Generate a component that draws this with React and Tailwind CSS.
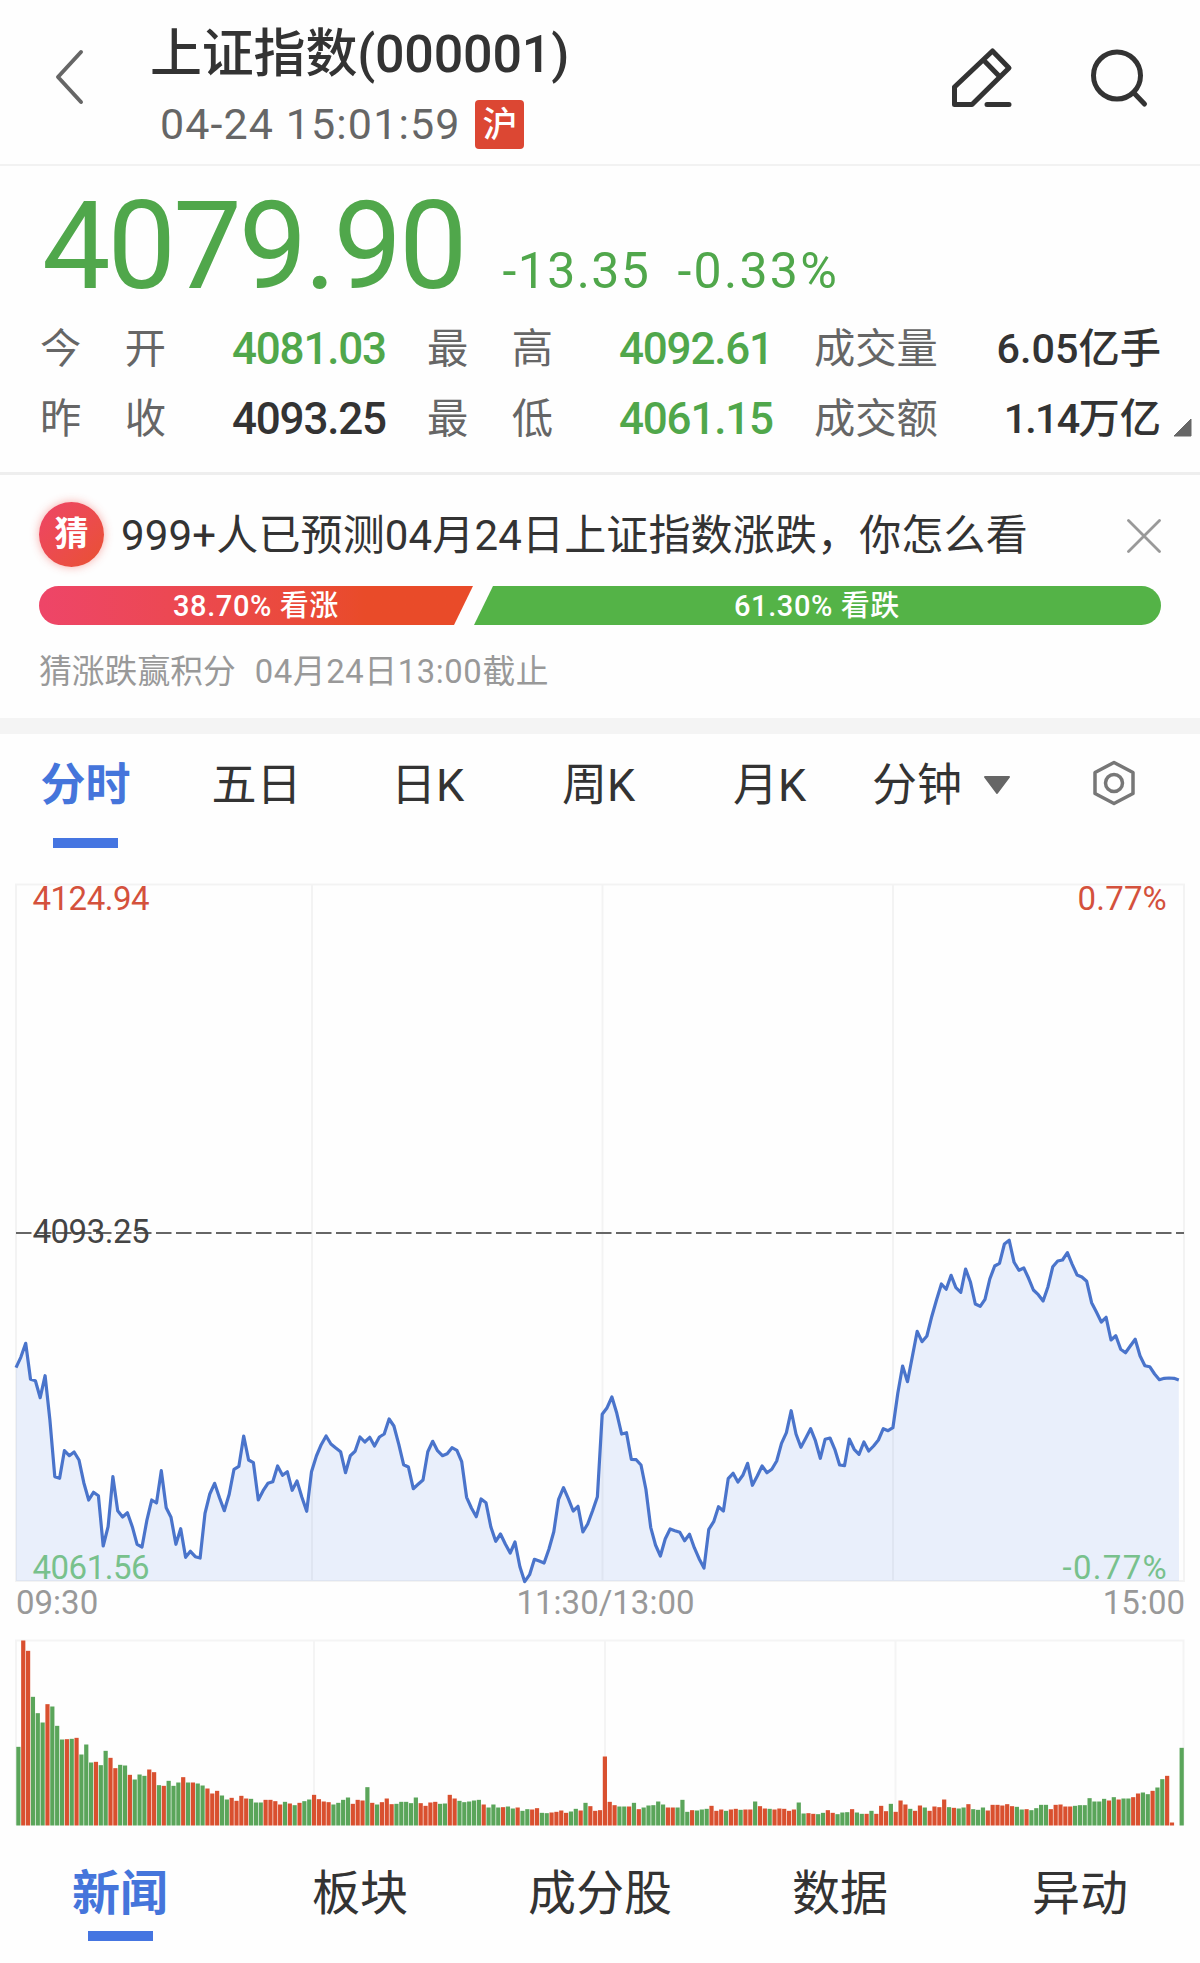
import clsx from "clsx";

const PERIOD_TABS = ["分时", "五日", "日K", "周K", "月K"];
const BOTTOM_TABS = ["新闻", "板块", "成分股", "数据", "异动"];

// one entry per minute, 09:30 - 15:00, in thirds of a pixel above/below the plot origin
const PRICES = [
  203, 172, 130, 238, 242, 293, 227, 360, 530, 535, 452, 467, 456, 480, 548,
  600, 577, 587, 738, 680, 530, 632, 651, 638, 680, 733, 741, 662, 600, 609,
  512, 623, 652, 733, 686, 772, 754, 770, 774, 640, 582, 550, 593, 632, 583,
  508, 499, 408, 480, 488, 600, 572, 550, 545, 498, 526, 515, 571, 543, 592,
  634, 515, 468, 434, 408, 432, 444, 455, 518, 467, 454, 411, 426, 412, 438,
  411, 402, 357, 378, 433, 494, 501, 566, 553, 540, 455, 424, 452, 467, 461,
  443, 451, 485, 592, 624, 650, 597, 608, 680, 724, 702, 732, 759, 726, 800,
  845, 824, 778, 783, 789, 748, 695, 598, 563, 596, 633, 619, 696, 672, 632,
  590, 343, 323, 291, 340, 402, 398, 478, 479, 495, 568, 682, 735, 768, 717,
  687, 692, 697, 722, 703, 743, 776, 804, 688, 665, 620, 633, 536, 520, 546,
  526, 490, 556, 528, 498, 518, 508, 483, 430, 398, 332, 402, 442, 415, 386,
  422, 475, 418, 414, 448, 495, 497, 417, 448, 463, 426, 453, 438, 420, 386,
  392, 383, 280, 198, 245, 170, 94, 125, 108, 50, 0, -48, -32, -74, -37, -23,
  -93, -53, 12, 19, -2, -63, -102, -110, -168, -179, -113, -89, -96, -65, -30,
  -16, 3, -40, -100, -117, -120, -142, -107, -75, -69, -56, 8, 36, 66, 52,
  120, 107, 148, 158, 138, 118, 167, 197, 200, 222, 239, 235, 234, 235, 240,
];

// negative = falling minute (green), positive = rising minute (red)
const VOLUMES = [
  -236, 555, 524, -386, -337, -309, 364, -357, -299, -258, 259, -260, 263,
  -213, -243, -189, 191, -181, -224, 203, 172, -182, -180, 152, -138, -153,
  -149, 168, 160, -121, 119, -134, -119, -129, 145, -129, 129, -126, -120,
  111, 96, 104, -90, -78, 83, 74, 89, 81, -80, -69, -69, 77, 77, 73, 63, -71,
  66, -61, 68, -73, -78, 92, 79, 72, 70, -63, -68, -77, -84, 65, 77, 75, -115,
  68, -63, 70, 81, 64, -65, -71, -71, -67, -84, 67, 59, 69, 71, -65, -66, 92,
  81, -74, -70, -72, -75, -77, 63, -54, -63, -54, 55, -57, -51, 54, -44, -49,
  48, 52, -38, -37, 39, 41, 45, 38, -42, -50, 45, -68, 58, 44, 46, 207, 71,
  61, -57, -57, 57, -68, 49, -54, -60, -61, -72, -63, 54, 54, -54, -77, -41,
  46, -45, -48, -50, 59, 44, 48, -44, 48, 50, -47, 48, 48, -72, 58, 51, -50,
  48, 51, 50, 44, 48, -69, -36, 37, 35, -34, -38, 46, 38, -34, -39, -40, 49,
  -39, -35, 35, -44, 35, 59, 43, -65, 41, 75, 63, -50, 44, 60, -54, 44, 57,
  55, 78, -55, 53, -51, -54, 64, -49, -47, -54, 45, 62, 62, 60, 64, 58, -56,
  -48, 49, -46, -52, -62, -62, 49, 62, 63, 57, 57, -59, -61, -61, -82, -72,
  -72, -80, 75, -85, 78, -81, -81, 85, 96, -99, -94, 104, -114, -139, 149, 9,
  0, -233,
];

function Header() {
  return (
    <header className="flex h-[166px] border-b-2 border-[#f2f2f2]">
      <svg className="h-[164px] w-[150px] shrink-0" viewBox="0 0 150 164">
        <path
          d="M81 52 58 77l23 25"
          fill="none"
          stroke="#666"
          strokeWidth="4"
          strokeLinecap="round"
          strokeLinejoin="round"
        />
      </svg>
      <div className="flex-1 pt-[24px]">
        <h1 className="h-[60px] text-[52px] leading-[62px] font-medium tracking-[-0.2px] whitespace-nowrap">
          上证指数(000001)
        </h1>
        <div className="mt-[10px] flex h-[60px] items-center pl-[10px]">
          <span className="text-[43px] tracking-[1.1px] text-[#666]">
            04-24 15:01:59
          </span>
          <span className="ml-[15px] flex size-[49px] items-center justify-center rounded-[4px] bg-[#dc4733] pt-[2px] text-[35px] font-medium text-white">
            沪
          </span>
        </div>
      </div>
      <svg
        className="h-[164px] w-[270px] shrink-0"
        viewBox="930 0 270 164"
        fill="none"
        stroke="#333"
        strokeWidth="5"
        strokeLinecap="round"
        strokeLinejoin="round"
      >
        <path d="M992.500 51 1009 68 972 104.500H954.500V87ZM983.500 60 1000 77M987 104.500H1009" />
        <circle cx="1117" cy="75.500" r="23.500" />
        <path d="M1133.500 92.500l11 11.500" />
      </svg>
    </header>
  );
}

function Stat({ label, value, color }) {
  return (
    <>
      <div className="flex w-[126px] justify-between pt-[4px] text-[#666]">
        {label.split("").map((char) => (
          <span key={char}>{char}</span>
        ))}
      </div>
      <div
        className={clsx(
          "-ml-px pt-[2px] text-[44px] font-medium tracking-[-1.2px]",
          color
        )}
      >
        {value}
      </div>
    </>
  );
}

function Quote() {
  return (
    <section className="h-[309px] border-b-[3px] border-[#eee]">
      <div className="flex h-[147px] items-baseline pl-[42px] text-[#50a74b]">
        <span className="text-[122px] leading-[162px] tracking-[-3px]">
          4079.90
        </span>
        <span className="ml-[38px] text-[50px] tracking-[1.4px]">-13.35</span>
        <span className="ml-[27px] text-[50px] tracking-[2.3px]">-0.33%</span>
      </div>
      <div className="grid grid-cols-[193px_194px_193px_194px_124px_1fr] grid-rows-[70px_70px] items-center pr-[39px] pl-10 text-[41.300px] whitespace-nowrap">
        <Stat label="今开" value="4081.03" color="text-[#50a74b]" />
        <Stat label="最高" value="4092.61" color="text-[#50a74b]" />
        <div className="pt-[4px] text-[#666]">成交量</div>
        <div className="pt-[3px] text-right font-medium">6.05亿手</div>
        <Stat label="昨收" value="4093.25" color="text-[#333]" />
        <Stat label="最低" value="4061.15" color="text-[#50a74b]" />
        <div className="pt-[4px] text-[#666]">成交额</div>
        <div className="relative pt-[3px] text-right font-medium">
          <span className="tracking-[-1.8px]">1.14</span>万亿
          <svg
            className="absolute -right-[31px] bottom-[3px] size-[19px]"
            viewBox="0 0 19 19"
          >
            <path d="M18 1v17H1Z" fill="#666" stroke="#666" strokeLinejoin="round" />
          </svg>
        </div>
      </div>
    </section>
  );
}

function Prediction() {
  return (
    <section className="h-[259px] border-b-[16px] border-[#f4f4f4] px-[39px] pt-[26px]">
      <div className="flex h-[66px] items-center">
        <span className="flex size-[65px] items-center justify-center rounded-full bg-linear-to-br from-[#ee4465] to-[#e9512f] text-[34px] font-bold text-white shadow-[0_0_10px_rgba(238,68,60,0.45)]">
          猜
        </span>
        <span className="ml-[17px] flex-1 pt-[3px] text-[42px] tracking-[0.15px] whitespace-nowrap">
          999+人已预测04月24日上证指数涨跌，你怎么看
        </span>
        <svg className="mt-[4px] size-[34px]" viewBox="0 0 34 34">
          <path
            d="M1.500 1.500l31 31M32.500 1.500l-31 31"
            stroke="#999"
            strokeWidth="2.800"
            strokeLinecap="round"
          />
        </svg>
      </div>
      <div className="mt-[19px] flex h-[39px] overflow-hidden rounded-full text-[29px] font-medium tracking-[0.6px] text-white">
        <div className="flex w-[434px] items-center justify-center bg-linear-to-r from-[#ee4568] to-[#e94b29] to-75% pt-[2px] [clip-path:polygon(0_0,100%_0,415px_100%,0_100%)]">
          38.70% 看涨
        </div>
        <div className="flex flex-1 items-center justify-center bg-[#54b347] pt-[2px] [clip-path:polygon(20px_0,100%_0,100%_100%,1px_100%)]">
          61.30% 看跌
        </div>
      </div>
      <p className="flex h-[94px] items-center gap-[19px] text-[32.800px] text-[#999]">
        <span>猜涨跌赢积分</span>
        <span className="tracking-[0.6px]">04月24日13:00截止</span>
      </p>
    </section>
  );
}

function PeriodTabs() {
  return (
    <nav className="flex h-[149px] text-[45px]">
      {PERIOD_TABS.map((tab, i) => (
        <div key={tab} className="flex w-[171px] flex-col items-center">
          <span
            className={clsx(
              "flex h-[104px] items-center pb-[2px]",
              i === 0 && "font-bold text-[#4575db]"
            )}
          >
            {tab}
          </span>
          {i === 0 && <span className="h-[10px] w-[65px] bg-[#4575e1]" />}
        </div>
      ))}
      <div className="flex h-[98px] flex-1 items-center pl-[17px]">
        <span className="pt-[4px]">分钟</span>
        <svg className="mt-[3px] ml-[21px] h-[20px] w-[28px]" viewBox="0 0 28 20">
          <path
            d="M2 2h24L14 18Z"
            fill="#666"
            stroke="#666"
            strokeWidth="2"
            strokeLinejoin="round"
          />
        </svg>
        <svg
          className="ml-[81px] h-[46px] w-[44px]"
          viewBox="0 0 44 46"
          fill="none"
          stroke="#777"
          strokeWidth="3.500"
          strokeLinejoin="round"
        >
          <path d="M22 2.500 41 12.500v21L22 43.500 3 33.500v-21Z" />
          <circle cx="22" cy="23" r="8.500" />
        </svg>
      </div>
    </nav>
  );
}

function PriceChart() {
  const line = PRICES.map(
    (p, i) => `${(16 + i * 4.845).toFixed(1)},${(417 + p / 3).toFixed(1)}`
  ).join(" ");

  return (
    <svg
      className="block h-[740px] w-[1200px] overflow-visible"
      viewBox="0 0 1200 740"
      fontSize="33"
    >
      <g fill="none" stroke="#f3f3f3" strokeWidth="2">
        <path d="M16 1.500H1184V698H16ZM312 1V698M602.500 1V698M893 1V698" />
      </g>
      <polygon
        points={`16,698 ${line} 1179,698`}
        fill="#4579e2"
        fillOpacity="0.115"
      />
      <path
        d="M16 350H1184"
        stroke="#666"
        strokeWidth="2"
        strokeDasharray="15.500 4.500"
      />
      <polyline
        points={line}
        fill="none"
        stroke="#4a74cb"
        strokeWidth="3.200"
        strokeLinejoin="round"
      />
      <g letterSpacing="-0.5">
        <text x="32.500" y="27" fill="#d4513c">4124.94</text>
        <text x="1167" y="27" textAnchor="end" letterSpacing="0.2" fill="#d4513c">0.77%</text>
        <text x="32.500" y="360" fill="#444">4093.25</text>
        <text x="32.500" y="695.500" fill="#78c18c">4061.56</text>
        <text x="1168" y="695.500" textAnchor="end" letterSpacing="1.300" fill="#78c18c">
          -0.77%
        </text>
      </g>
      <g fill="#999">
        <text x="16" y="731">09:30</text>
        <text x="605.500" y="731" textAnchor="middle">11:30/13:00</text>
        <text x="1185" y="731" textAnchor="end">15:00</text>
      </g>
    </svg>
  );
}

function VolumeChart() {
  return (
    <svg className="mt-[16px] block h-[187px] w-[1200px]" viewBox="0 0 1200 187">
      <path
        d="M16 186V1.500H1183.500V186M314 1V186M605 1V186M895.500 1V186"
        fill="none"
        stroke="#f4f4f4"
        strokeWidth="2"
      />
      {VOLUMES.map((v, i) => (
        <rect
          key={i}
          x={16.3 + i * 4.847}
          y={186.5 - Math.abs(v) / 3}
          width="4.200"
          height={Math.abs(v) / 3}
          fill={v < 0 ? "#5aa55a" : "#d9502f"}
        />
      ))}
    </svg>
  );
}

function BottomTabs() {
  return (
    <nav className="grid grid-cols-5 pt-[24px] text-[48px]">
      {BOTTOM_TABS.map((tab, i) => (
        <div key={tab} className="flex flex-col items-center">
          <span
            className={clsx(
              "flex h-[81px] items-center pt-[6px]",
              i === 0 && "font-bold text-[#4575db]"
            )}
          >
            {tab}
          </span>
          {i === 0 && <span className="h-[10px] w-[65px] bg-[#4575e1]" />}
        </div>
      ))}
    </nav>
  );
}

export default function App() {
  return (
    <main className="h-[1963px] w-[1200px] overflow-hidden bg-[#fefefe] font-['Roboto','Noto_Sans_CJK_SC',sans-serif] leading-none text-[#333]">
      <Header />
      <Quote />
      <Prediction />
      <PeriodTabs />
      <PriceChart />
      <VolumeChart />
      <BottomTabs />
    </main>
  );
}
